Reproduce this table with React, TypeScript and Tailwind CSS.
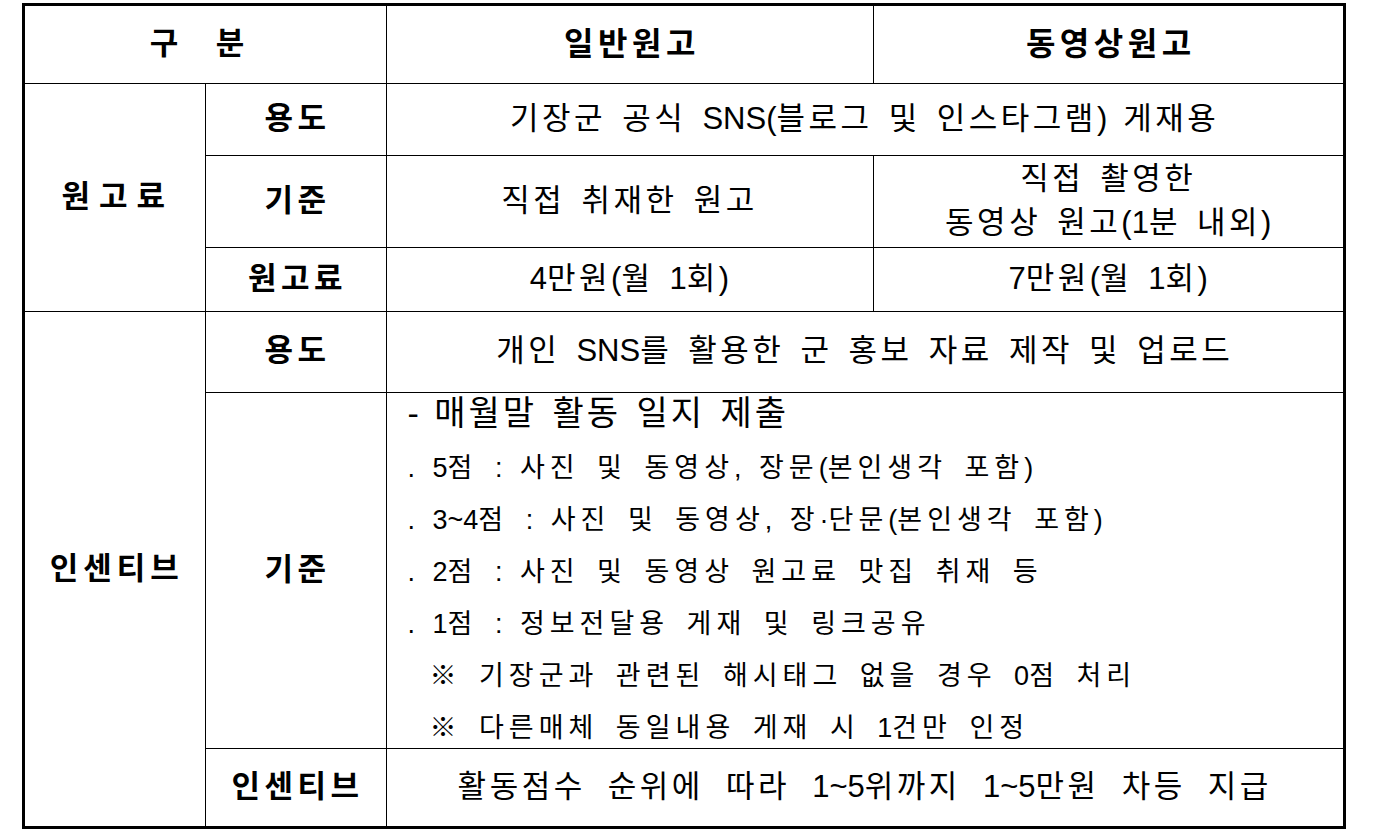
import React from 'react';

// 원고료 / 인센티브 안내 표
const cell = 'border border-black text-center align-middle';
const label = 'font-bold text-[31px] tracking-[4.5px] pl-[4px]';
const body = 'text-[31px] tracking-[3.5px] [word-spacing:4px]';
const listLine = 'h-[36px] leading-[36px] text-[27px] tracking-[5px] [word-spacing:5px] whitespace-nowrap';

const criteria = [
  '. 5점 : 사진 및 동영상, 장문(본인생각 포함)',
  '. 3~4점 : 사진 및 동영상, 장·단문(본인생각 포함)',
  '. 2점 : 사진 및 동영상 원고료 맛집 취재 등',
  '. 1점 : 정보전달용 게재 및 링크공유',
];

const notes = [
  '※ 기장군과 관련된 해시태그 없을 경우 0점 처리',
  '※ 다른매체 동일내용 게재 시 1건만 인정',
];

// latin / digit runs are set tight, hangul keeps the wide tracking
function Txt({ text }: { text: string }) {
  const parts = text.split(/([!-~·]+)/);
  return (
    <>
      {parts.map((p, i) =>
        i % 2 === 1 ? (
          <span key={i} className="tracking-normal">{p}</span>
        ) : (
          p
        )
      )}
    </>
  );
}

export default function App() {
  return (
    <div className="w-[1389px] h-[831px] bg-white pt-[3px] pl-[22px] text-black [font-family:'Liberation_Sans_Narrow','Liberation_Sans','Noto_Sans_CJK_KR',sans-serif]">
      <div className="w-[1324px] border-[3px] border-black">
        <table className="w-full table-fixed border-collapse border-hidden">
          <colgroup>
            <col className="w-[180px]" />
            <col className="w-[181px]" />
            <col className="w-[487px]" />
            <col className="w-[470px]" />
          </colgroup>
          <tbody>
            <tr className="h-[77px]">
              <td colSpan={2} className={`${cell} font-bold text-[31px] tracking-[4.5px] pr-[12px] [word-spacing:20px]`}>구 분</td>
              <td className={`${cell} font-bold text-[32px] tracking-[4.5px] pl-[5px]`}>일반원고</td>
              <td className={`${cell} font-bold text-[32px] tracking-[4.5px] pl-[5px]`}>동영상원고</td>
            </tr>

            <tr className="h-[72px]">
              <td rowSpan={3} className={`${cell} font-bold text-[31px] tracking-[9px] pl-[6px]`}>원고료</td>
              <td className={`${cell} ${label}`}>용도</td>
              <td colSpan={2} className={`${cell} ${body}`}>
                <Txt text="기장군 공식 SNS(블로그 및 인스타그램) 게재용" />
              </td>
            </tr>
            <tr className="h-[92px]">
              <td className={`${cell} ${label}`}>기준</td>
              <td className={`${cell} ${body}`}>직접 취재한 원고</td>
              <td className={`${cell} ${body} leading-[44px]`}>
                <div>직접 촬영한</div>
                <div>
                  <Txt text="동영상 원고(1분 내외)" />
                </div>
              </td>
            </tr>
            <tr className="h-[64px]">
              <td className={`${cell} ${label}`}>원고료</td>
              <td className={`${cell} ${body}`}>
                <Txt text="4만원(월 1회)" />
              </td>
              <td className={`${cell} ${body}`}>
                <Txt text="7만원(월 1회)" />
              </td>
            </tr>

            <tr className="h-[81px]">
              <td rowSpan={3} className={`${cell} font-bold text-[31px] tracking-[5px] pl-[4px]`}>인센티브</td>
              <td className={`${cell} ${label}`}>용도</td>
              <td colSpan={2} className={`${cell} ${body}`}>
                <Txt text="개인 SNS를 활용한 군 홍보 자료 제작 및 업로드" />
              </td>
            </tr>
            <tr className="h-[356px]">
              <td className={`${cell} ${label}`}>기준</td>
              <td colSpan={2} className="border border-black text-left align-top pl-[21px]">
                <div className="h-[40px] leading-[40px] text-[34px] tracking-[3px] [word-spacing:3px] whitespace-nowrap">
                  <Txt text="- 매월말 활동 일지 제출" />
                </div>
                <div className="mt-[17px] flex flex-col gap-[16px]">
                  {criteria.map((line) => (
                    <div key={line} className={listLine}>
                      <Txt text={line} />
                    </div>
                  ))}
                  {notes.map((line) => (
                    <div key={line} className={`${listLine} pl-[22px]`}>
                      <Txt text={line} />
                    </div>
                  ))}
                </div>
              </td>
            </tr>
            <tr className="h-[78px]">
              <td className={`${cell} ${label}`}>인센티브</td>
              <td colSpan={2} className={`${cell} ${body} [word-spacing:10px]`}>
                <Txt text="활동점수 순위에 따라 1~5위까지 1~5만원 차등 지급" />
              </td>
            </tr>
          </tbody>
        </table>
      </div>
    </div>
  );
}
